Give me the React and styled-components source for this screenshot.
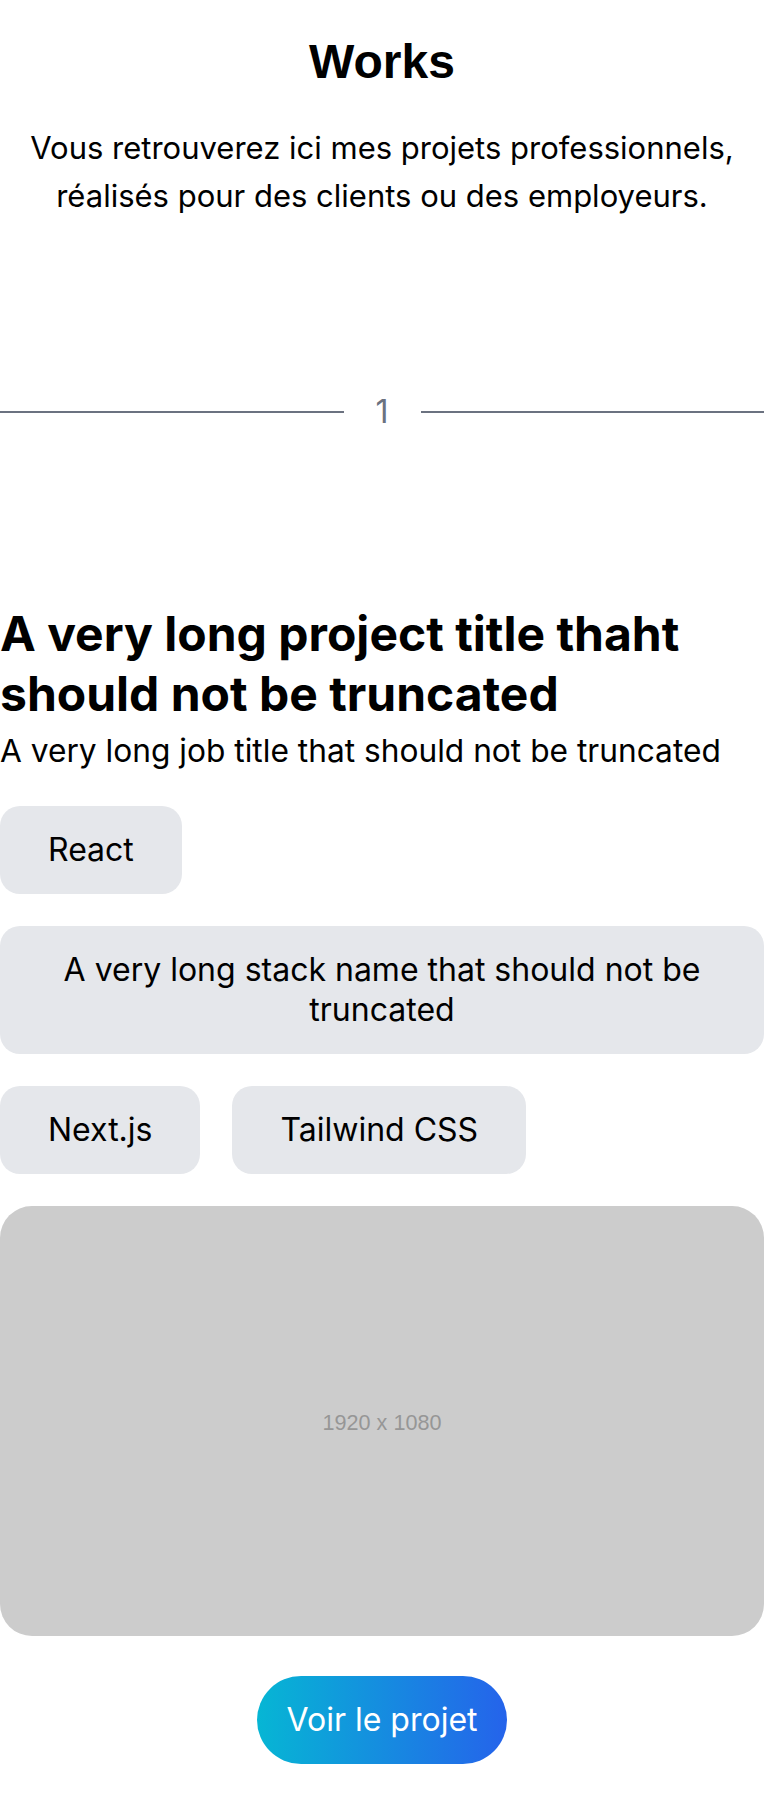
import React from "react";
import styled, { createGlobalStyle } from "styled-components";

const GlobalStyle = createGlobalStyle`
  body {
    margin: 0;
    background: #ffffff;
    color: #000000;
    font-family: Inter, "Noto Sans", sans-serif;
  }
  * {
    box-sizing: border-box;
  }
`;

const stacks = [
  "React",
  "A very long stack name that should not be truncated",
  "Next.js",
  "Tailwind CSS"
];

function App() {
  return (
    <>
      <GlobalStyle />
      <Page>
        <Header>
          <Title>Works</Title>
          <Intro>
            Vous retrouverez ici mes projets professionnels, réalisés pour des
            clients ou des employeurs.
          </Intro>
        </Header>

        <Divider>
          <Line />
          <Index>1</Index>
          <Line />
        </Divider>

        <Project>
          <ProjectHead>
            <ProjectTitle>
              A very long project title thaht should not be truncated
            </ProjectTitle>
            <JobTitle>A very long job title that should not be truncated</JobTitle>
          </ProjectHead>

          <Stack>
            {stacks.map(name => (
              <Tag key={name}>{name}</Tag>
            ))}
          </Stack>

          <Placeholder>
            <PlaceholderText>1920 x 1080</PlaceholderText>
          </Placeholder>

          <Actions>
            <ProjectLink href="#">Voir le projet</ProjectLink>
          </Actions>
        </Project>
      </Page>
    </>
  );
}

export default App;

const Page = styled.main`
  display: flex;
  flex-direction: column;
  padding: 34px 0 32px;
`;
const Header = styled.header`
  display: flex;
  flex-direction: column;
  align-items: center;
  text-align: center;
`;
const Title = styled.h1`
  margin: 0;
  font-family: "Liberation Sans", Arial, sans-serif;
  font-size: 48px;
  font-weight: 700;
  line-height: normal;
`;
const Intro = styled.p`
  margin: 35px 0 0;
  padding: 0 16px;
  font-size: 31px;
  line-height: 48px;
`;
const Divider = styled.div`
  display: flex;
  align-items: center;
  gap: 32px;
  margin: 172px 0;
`;
const Line = styled.span`
  flex: 1;
  height: 2px;
  background: #6b7280;
`;
const Index = styled.span`
  font-size: 32px;
  line-height: 40px;
  color: #6b7280;
`;
const Project = styled.article`
  display: flex;
  flex-direction: column;
`;
const ProjectHead = styled.div`
  display: flex;
  flex-direction: column;
`;
const ProjectTitle = styled.h2`
  margin: 0;
  font-size: 48px;
  font-weight: 700;
  line-height: 60px;
`;
const JobTitle = styled.p`
  margin: 3px 0 0;
  font-size: 31.7px;
  line-height: 48px;
`;
const Stack = styled.ul`
  display: flex;
  flex-wrap: wrap;
  gap: 32px;
  margin: 31px 0 0;
  padding: 0;
  list-style: none;
`;
const Tag = styled.li`
  padding: 24px 48px;
  border-radius: 20px;
  background: #e5e7eb;
  font-size: 32px;
  line-height: 40px;
  text-align: center;
`;
const Placeholder = styled.div`
  display: flex;
  align-items: center;
  justify-content: center;
  margin-top: 32px;
  width: 100%;
  aspect-ratio: 16 / 9;
  border-radius: 32px;
  background: #cccccc;
`;
const PlaceholderText = styled.span`
  padding-top: 5px;
  font-family: "Liberation Sans", Arial, sans-serif;
  font-size: 21.6px;
  color: #969696;
`;
const Actions = styled.div`
  display: flex;
  justify-content: center;
  margin-top: 40px;
`;
const ProjectLink = styled.a`
  padding: 24px 29px;
  border-radius: 9999px;
  background: linear-gradient(to right, #06b6d4, #2563eb);
  color: #ffffff;
  font-size: 32px;
  line-height: 40px;
  text-decoration: none;
`;
